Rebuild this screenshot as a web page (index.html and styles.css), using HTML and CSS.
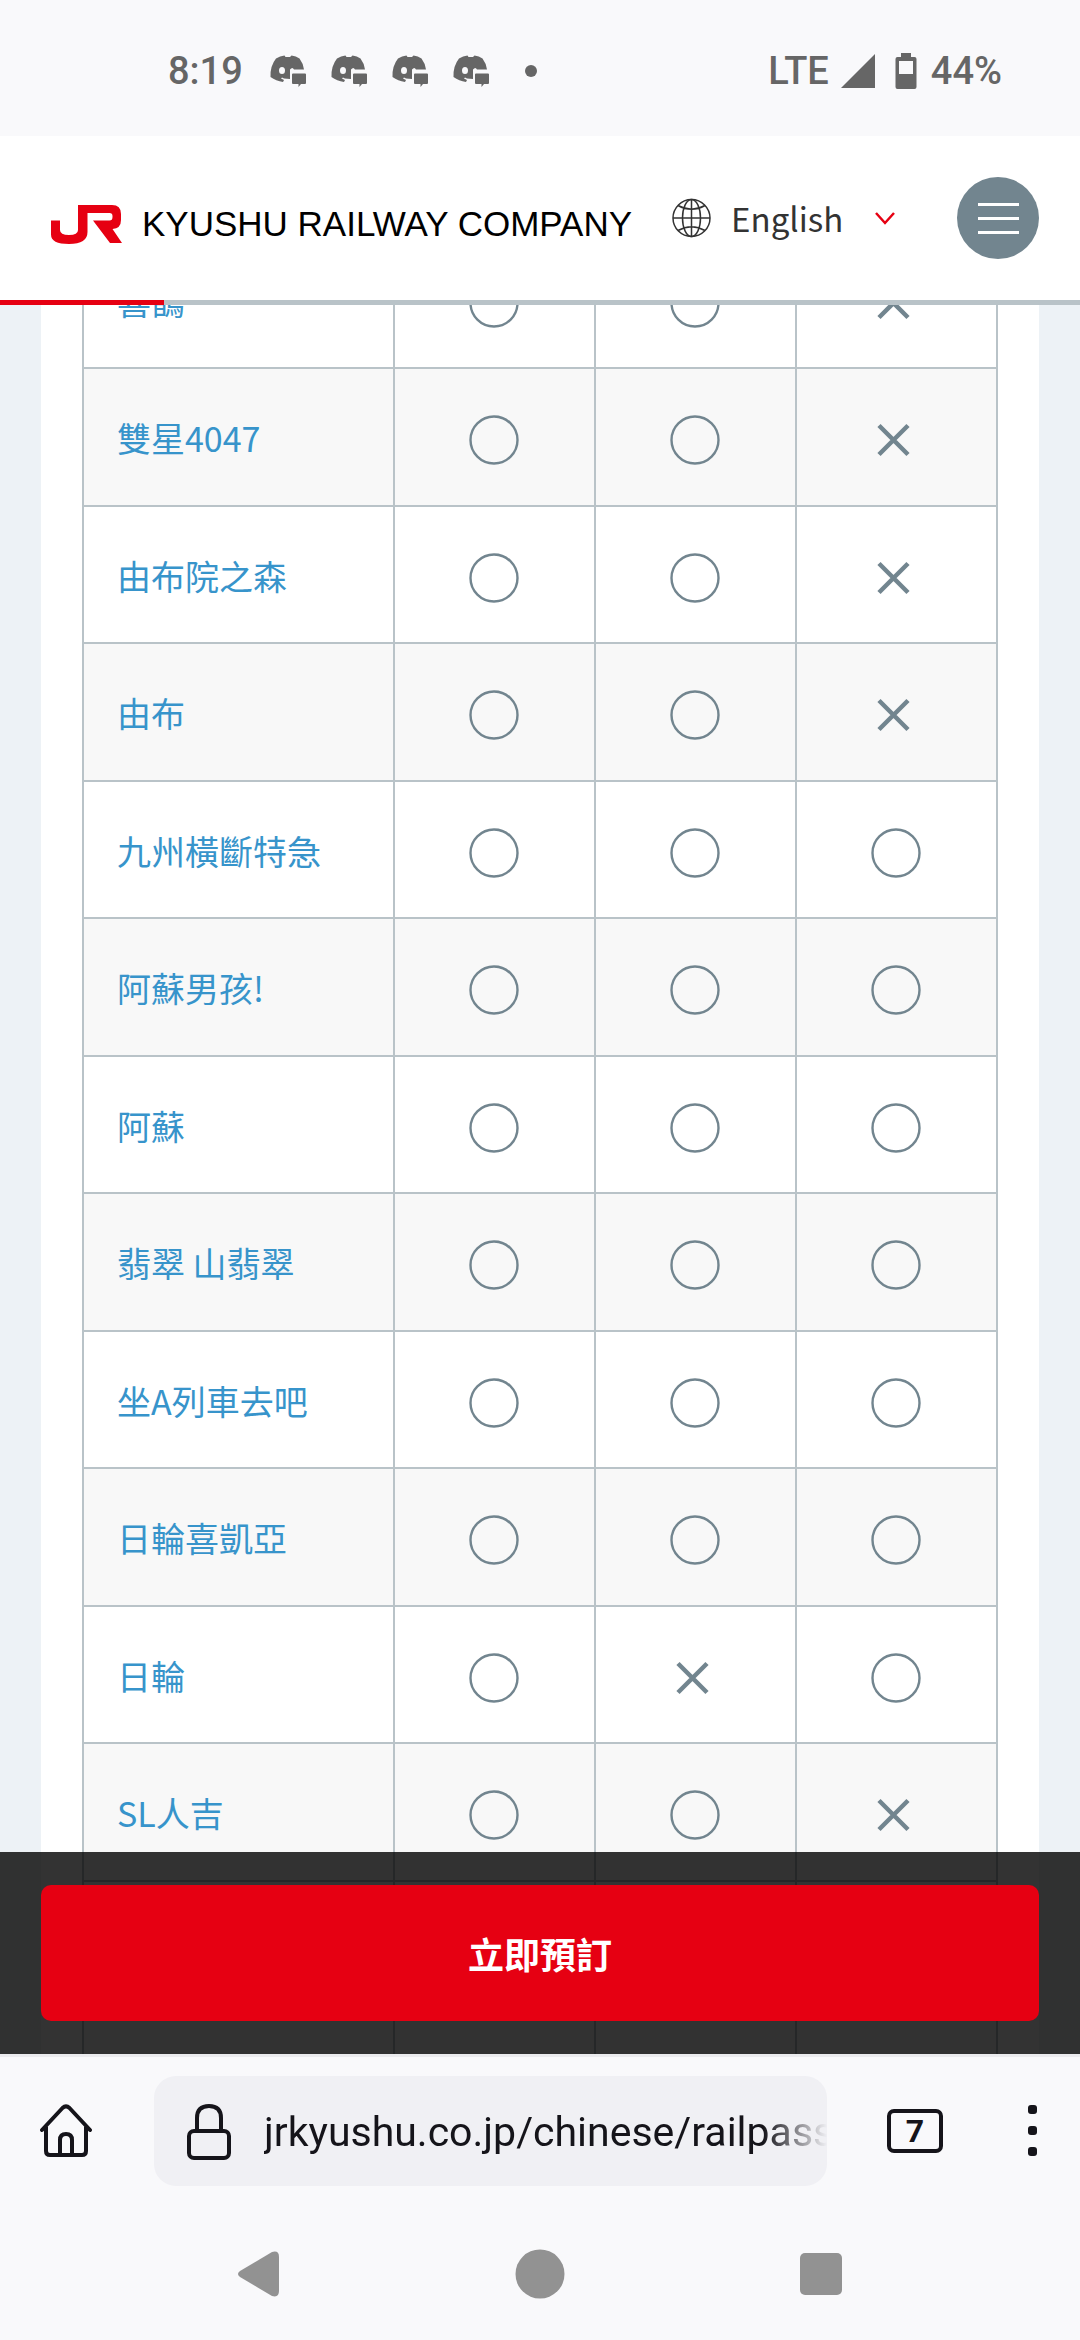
FILE: index.html
```html
<!DOCTYPE html>
<html lang="zh-TW">
<head>
    <meta charset="UTF-8">
    <meta name="viewport" content="width=device-width, initial-scale=1.0">
    <title>JR KYUSHU RAILWAY COMPANY</title>
    <link rel="stylesheet" href="styles.css">
</head>
<body>
    <!-- 共用圖示 -->
    <svg class="symbols" aria-hidden="true">
        <symbol id="yes" viewBox="0 0 50 50">
            <circle cx="25" cy="25" r="23.5" fill="none" stroke="#72858f" stroke-width="2.4"/>
        </symbol>
        <symbol id="no" viewBox="0 0 50 50">
            <path d="M8 10.5L37 39.5M37 10.5L8 39.5" fill="none" stroke="#72858f" stroke-width="4.5"/>
        </symbol>
        <symbol id="chat" viewBox="0 0 36 32">
            <path fill="#666" d="M6 3.5Q10 1 14.500 .5L15.500 2H20L21.500 .5Q26 1 29.500 3.500Q33 8 34 14.500H24Q22.500 11.500 20 14.500V24L14 23.500L12 22.500L11 23.500L14 25L13 27Q6 26 .5 22Q0 11 6 3.5Z"/>
            <ellipse cx="12" cy="15.500" rx="3" ry="3.500" fill="#f9f9fb"/>
            <path fill="#666" d="M23 18.500H35Q36 18.500 36 19.500V28Q36 29 35 29H31L28.500 32V29H23Q22 29 22 28V19.500Q22 18.500 23 18.500Z"/>
        </symbol>
    </svg>

    <div class="status-bar">
        <div class="status-left">
            <span class="clock">8:19</span>
            <div class="notices">
                <svg width="36" height="32"><use href="#chat"/></svg>
                <svg width="36" height="32"><use href="#chat"/></svg>
                <svg width="36" height="32"><use href="#chat"/></svg>
                <svg width="36" height="32"><use href="#chat"/></svg>
            </div>
            <span class="notice-dot"></span>
        </div>
        <div class="status-right">
            <span>LTE</span>
            <svg class="signal" width="34" height="34" viewBox="0 0 34 34"><path d="M34 0V34H0Z" fill="#666"/></svg>
            <svg class="battery" width="22" height="36" viewBox="0 0 22 36">
                <path fill="#666" fill-rule="evenodd" d="M6 0H16V4H19.500Q21.500 4 21.500 6V34Q21.500 36 19.500 36H2.500Q.5 36 .5 34V6Q.5 4 2.500 4H6ZM4 8V21H18V8Z"/>
            </svg>
            <span>44%</span>
        </div>
    </div>

    <header class="header">
        <a class="logo" href="#">
            <svg width="71" height="39" viewBox="0 0 71 39" aria-label="JR">
                <path fill="#e60012" d="M0 15.500H9V25Q9 30 18 30Q27 30 27 25V0H61Q70 0 70 9V15Q70 23.500 61.500 24L71 38H59L42 15.500H58.500Q61.500 15.500 61.500 12V11Q61.500 8 58.500 8H36.500V27Q36.500 39 18 39Q0 39 0 29.500Z"/>
            </svg>
            <span>KYUSHU RAILWAY COMPANY</span>
        </a>
        <div class="language">
            <svg width="39" height="40" viewBox="0 0 39 40" fill="none" stroke="#333" stroke-width="1.5" aria-hidden="true">
                <circle cx="19.500" cy="20" r="18.500"/>
                <ellipse cx="19.500" cy="20" rx="9" ry="18.500"/>
                <path d="M19.500 1.500V38.500M1 20H38M6 7.500Q19.500 15 33 7.500M6 32.500Q19.500 25 33 32.500"/>
            </svg>
            <select class="language-select" aria-label="Language">
                <option>English</option>
            </select>
            <svg class="chevron" width="20" height="13" viewBox="0 0 20 13" aria-hidden="true"><path d="M1 1L10 11L19 1" fill="none" stroke="#e60012" stroke-width="2.5"/></svg>
        </div>
        <button class="menu-button" aria-label="選單">
            <span></span>
            <span></span>
            <span></span>
        </button>
    </header>
    <div class="progress"><div class="progress-value"></div></div>

    <main class="page">
        <div class="card">
            <table class="trains">
                <tbody>
                    <tr>
                        <td><a href="#">喜鵲</a></td>
                        <td><svg><use href="#yes"/></svg></td>
                        <td><svg><use href="#yes"/></svg></td>
                        <td><svg><use href="#no"/></svg></td>
                    </tr>
                    <tr>
                        <td><a href="#">雙星4047</a></td>
                        <td><svg><use href="#yes"/></svg></td>
                        <td><svg><use href="#yes"/></svg></td>
                        <td><svg><use href="#no"/></svg></td>
                    </tr>
                    <tr>
                        <td><a href="#">由布院之森</a></td>
                        <td><svg><use href="#yes"/></svg></td>
                        <td><svg><use href="#yes"/></svg></td>
                        <td><svg><use href="#no"/></svg></td>
                    </tr>
                    <tr>
                        <td><a href="#">由布</a></td>
                        <td><svg><use href="#yes"/></svg></td>
                        <td><svg><use href="#yes"/></svg></td>
                        <td><svg><use href="#no"/></svg></td>
                    </tr>
                    <tr>
                        <td><a href="#">九州橫斷特急</a></td>
                        <td><svg><use href="#yes"/></svg></td>
                        <td><svg><use href="#yes"/></svg></td>
                        <td><svg><use href="#yes"/></svg></td>
                    </tr>
                    <tr>
                        <td><a href="#">阿蘇男孩!</a></td>
                        <td><svg><use href="#yes"/></svg></td>
                        <td><svg><use href="#yes"/></svg></td>
                        <td><svg><use href="#yes"/></svg></td>
                    </tr>
                    <tr>
                        <td><a href="#">阿蘇</a></td>
                        <td><svg><use href="#yes"/></svg></td>
                        <td><svg><use href="#yes"/></svg></td>
                        <td><svg><use href="#yes"/></svg></td>
                    </tr>
                    <tr>
                        <td><a href="#">翡翠 山翡翠</a></td>
                        <td><svg><use href="#yes"/></svg></td>
                        <td><svg><use href="#yes"/></svg></td>
                        <td><svg><use href="#yes"/></svg></td>
                    </tr>
                    <tr>
                        <td><a href="#">坐A列車去吧</a></td>
                        <td><svg><use href="#yes"/></svg></td>
                        <td><svg><use href="#yes"/></svg></td>
                        <td><svg><use href="#yes"/></svg></td>
                    </tr>
                    <tr>
                        <td><a href="#">日輪喜凱亞</a></td>
                        <td><svg><use href="#yes"/></svg></td>
                        <td><svg><use href="#yes"/></svg></td>
                        <td><svg><use href="#yes"/></svg></td>
                    </tr>
                    <tr>
                        <td><a href="#">日輪</a></td>
                        <td><svg><use href="#yes"/></svg></td>
                        <td><svg><use href="#no"/></svg></td>
                        <td><svg><use href="#yes"/></svg></td>
                    </tr>
                    <tr>
                        <td><a href="#">SL人吉</a></td>
                        <td><svg><use href="#yes"/></svg></td>
                        <td><svg><use href="#yes"/></svg></td>
                        <td><svg><use href="#no"/></svg></td>
                    </tr>
                    <tr><td></td><td></td><td></td><td></td></tr>
                    <tr><td></td><td></td><td></td><td></td></tr>
                </tbody>
            </table>
        </div>
        <div class="booking">
            <button class="booking-button">立即預訂</button>
        </div>
    </main>

    <div class="browser-bar">
        <button class="icon-button" aria-label="首頁">
            <svg width="52" height="54" viewBox="0 0 52 54" fill="none" stroke="#15141a" stroke-width="4" stroke-linecap="round" stroke-linejoin="round">
                <path d="M2 26L22.500 4Q26 .8 29.500 4L50 26M6 23V47Q6 51 10 51H42Q46 51 46 47V23M20 50V36Q20 30 26 30Q32 30 32 36V50"/>
            </svg>
        </button>
        <label class="address">
            <svg width="44" height="56" viewBox="0 0 44 56" fill="none" stroke="#15141a" stroke-width="4">
                <rect x="2" y="27" width="40" height="27" rx="5"/>
                <path d="M10 27V14Q10 2 22 2Q34 2 34 14V27"/>
            </svg>
            <input class="address-input" type="text" value="jrkyushu.co.jp/chinese/railpass" aria-label="網址">
        </label>
        <button class="tabs-button" aria-label="分頁">7</button>
        <button class="icon-button" aria-label="更多">
            <svg width="9" height="52" viewBox="0 0 9 52" fill="#15141a">
                <rect y="0" width="9" height="9" rx="3"/>
                <rect y="21" width="9" height="9" rx="3"/>
                <rect y="42" width="9" height="9" rx="3"/>
            </svg>
        </button>
    </div>

    <nav class="system-nav">
        <button class="icon-button" aria-label="返回">
            <svg width="42" height="46" viewBox="0 0 42 46"><path fill="#929292" d="M2 20L34 1Q41-1 41 6V40Q41 47 34 45L2 26Q-2 23 2 20Z"/></svg>
        </button>
        <button class="icon-button" aria-label="主畫面">
            <svg width="50" height="50" viewBox="0 0 50 50"><circle cx="25" cy="25" r="24.500" fill="#929292"/></svg>
        </button>
        <button class="icon-button" aria-label="最近使用">
            <svg width="42" height="42" viewBox="0 0 42 42"><rect width="42" height="42" rx="5" fill="#929292"/></svg>
        </button>
    </nav>
</body>
</html>
```
FILE: styles.css
```css
* {
    box-sizing: border-box;
}

body {
    display: flex;
    flex-direction: column;
    height: 100vh;
    margin: 0;
    background-color: #f9f9fb;
    color: #333333;
    font-family: "Noto Sans CJK TC", sans-serif;
    font-size: 34px;
}

button {
    border: 0;
    padding: 0;
    font-family: inherit;
}

svg {
    display: block;
    flex-shrink: 0;
}

.symbols {
    position: absolute;
    width: 0;
    height: 0;
}

/* 手機狀態列 */
.status-bar {
    display: flex;
    justify-content: space-between;
    align-items: center;
    height: 136px;
    padding: 6px 78px 0 168px;
    color: #666666;
    font-family: Roboto, sans-serif;
    font-size: 38px;
    font-weight: 500;
}

.status-left,
.status-right,
.notices {
    display: flex;
    align-items: center;
}

.clock {
    width: 76px;
}

.notices {
    gap: 25px;
    margin-left: 26px;
}

.notice-dot {
    width: 12px;
    height: 12px;
    margin-left: 36px;
    border-radius: 50%;
    background-color: #666666;
}

.signal {
    margin-left: 12px;
}

.battery {
    margin: 0 14px 0 20px;
}

/* 網站頁首 */
.header {
    display: flex;
    align-items: center;
    height: 164px;
    padding: 0 41px 0 51px;
    background-color: #ffffff;
}

.logo {
    display: flex;
    align-items: center;
    gap: 20px;
    padding-top: 12px;
    color: #000000;
    font-family: "Liberation Sans", sans-serif;
    font-size: 35px;
    text-decoration: none;
    white-space: nowrap;
}

.language {
    display: flex;
    align-items: center;
    flex: 1;
    margin-left: 40px;
}

.language-select {
    appearance: none;
    width: 144px;
    margin-left: 20px;
    padding: 0;
    border: 0;
    background: none;
    color: #333333;
    font-family: "Noto Sans CJK TC", sans-serif;
    font-size: 33px;
}

.menu-button {
    display: flex;
    flex-direction: column;
    justify-content: center;
    align-items: center;
    gap: 11px;
    width: 82px;
    height: 82px;
    border-radius: 50%;
    background-color: #72858f;
}

.menu-button span {
    width: 41px;
    height: 3px;
    background-color: #ffffff;
}

.progress {
    height: 5px;
    background-color: #b9c3c8;
}

.progress-value {
    width: 164px;
    height: 5px;
    background-color: #e60012;
}

/* 列車表格 */
.page {
    position: relative;
    flex: 1;
    min-height: 0;
    padding: 0 41px;
    overflow: hidden;
    background-color: #edf2f6;
}

.card {
    padding: 0 41px;
    background-color: #ffffff;
}

/* 往上捲動後的位置 */
.trains {
    position: relative;
    top: -75px;
    width: 100%;
    border-collapse: collapse;
    table-layout: fixed;
}

.trains td {
    width: 22%;
    height: 137px;
    padding: 6px 0 0;
    border: 2px solid #b9c3c8;
    line-height: 50px;
}

.trains td:first-child {
    width: 34%;
    padding: 2px 0 0 33px;
}

.trains tr:nth-child(even) td {
    height: 138px;
    background-color: #f8f8f8;
}

.trains svg {
    width: 50px;
    height: 50px;
    margin: 0 auto;
}

.trains a {
    color: #3794cb;
    text-decoration: none;
}

.booking {
    position: absolute;
    right: 0;
    bottom: 0;
    left: 0;
    padding: 33px 41px;
    background-color: rgba(0, 0, 0, 0.8);
}

.booking-button {
    display: block;
    width: 100%;
    height: 136px;
    border-radius: 10px;
    background-color: #e60012;
    color: #ffffff;
    font-size: 36px;
    font-weight: bold;
}

/* 瀏覽器工具列 */
.browser-bar {
    display: flex;
    align-items: center;
    padding: 19px 43px 22px 40px;
    border-top: 3px solid #ebebee;
}

.icon-button {
    background: none;
}

.address {
    display: flex;
    align-items: center;
    flex: 1;
    gap: 33px;
    height: 110px;
    margin: 0 60px 0 62px;
    padding: 2px 0 0 33px;
    border-radius: 22px;
    background-color: #f0f0f4;
}

.address-input {
    flex: 1;
    min-width: 0;
    padding: 0;
    border: 0;
    background: none;
    color: #15141a;
    font-family: Roboto, sans-serif;
    font-size: 41px;
    -webkit-mask-image: linear-gradient(to left, transparent, #000 64px);
    mask-image: linear-gradient(to left, transparent, #000 64px);
}

.tabs-button {
    width: 56px;
    height: 44px;
    margin-right: 85px;
    border: 4px solid #15141a;
    border-radius: 7px;
    background: none;
    color: #15141a;
    font-family: Roboto, sans-serif;
    font-size: 32px;
    font-weight: bold;
    line-height: 36px;
}

.system-nav {
    display: flex;
    justify-content: space-between;
    align-items: center;
    height: 132px;
    padding: 0 238px;
}
```
